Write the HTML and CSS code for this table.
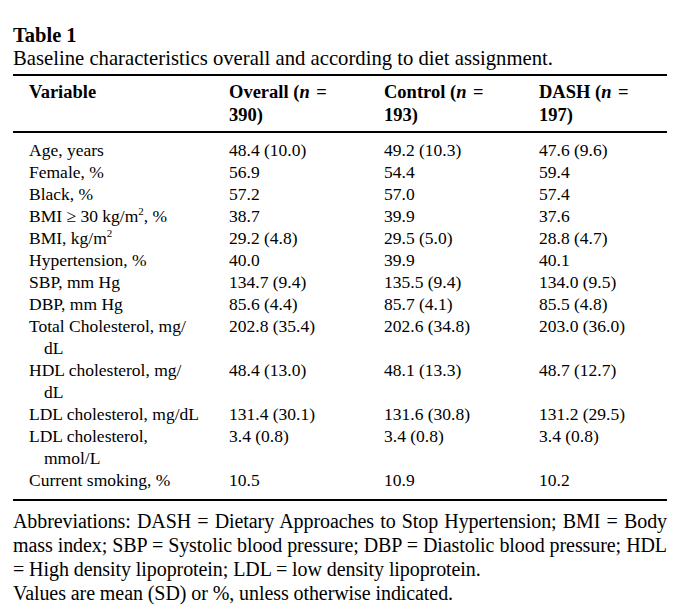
FILE: index.html
```html
<!DOCTYPE html>
<html lang="en">
<head>
<meta charset="utf-8">
<title>Table 1</title>
<link rel="stylesheet" href="styles.css">
</head>
<body>
<div class="page">
  <div class="title">Table 1</div>
  <div class="caption">Baseline characteristics overall and according to diet assignment.</div>
  <table class="data">
    <colgroup>
      <col class="w1">
      <col class="w2">
      <col class="w3">
      <col class="w4">
    </colgroup>
    <thead>
      <tr>
        <th class="c1">Variable</th>
        <th>Overall (<i>n</i> <span class="eq">=</span><br>390)</th>
        <th>Control (<i>n</i> <span class="eq">=</span><br>193)</th>
        <th>DASH (<i>n</i> <span class="eq">=</span><br>197)</th>
      </tr>
    </thead>
    <tbody>
      <tr class="first"><td class="c1">Age, years</td><td>48.4 (10.0)</td><td>49.2 (10.3)</td><td>47.6 (9.6)</td></tr>
      <tr><td class="c1">Female, %</td><td>56.9</td><td>54.4</td><td>59.4</td></tr>
      <tr><td class="c1">Black, %</td><td>57.2</td><td>57.0</td><td>57.4</td></tr>
      <tr><td class="c1">BMI <span class="geq">≥</span> 30 kg/m<sup>2</sup>, %</td><td>38.7</td><td>39.9</td><td>37.6</td></tr>
      <tr><td class="c1">BMI, kg/m<sup>2</sup></td><td>29.2 (4.8)</td><td>29.5 (5.0)</td><td>28.8 (4.7)</td></tr>
      <tr><td class="c1">Hypertension, %</td><td>40.0</td><td>39.9</td><td>40.1</td></tr>
      <tr><td class="c1">SBP, mm Hg</td><td>134.7 (9.4)</td><td>135.5 (9.4)</td><td>134.0 (9.5)</td></tr>
      <tr><td class="c1">DBP, mm Hg</td><td>85.6 (4.4)</td><td>85.7 (4.1)</td><td>85.5 (4.8)</td></tr>
      <tr><td class="c1">Total Cholesterol, mg/<br>dL</td><td>202.8 (35.4)</td><td>202.6 (34.8)</td><td>203.0 (36.0)</td></tr>
      <tr><td class="c1">HDL cholesterol, mg/<br>dL</td><td>48.4 (13.0)</td><td>48.1 (13.3)</td><td>48.7 (12.7)</td></tr>
      <tr><td class="c1">LDL cholesterol, mg/dL</td><td>131.4 (30.1)</td><td>131.6 (30.8)</td><td>131.2 (29.5)</td></tr>
      <tr><td class="c1">LDL cholesterol,<br>mmol/L</td><td>3.4 (0.8)</td><td>3.4 (0.8)</td><td>3.4 (0.8)</td></tr>
      <tr class="last"><td class="c1">Current smoking, %</td><td>10.5</td><td>10.9</td><td>10.2</td></tr>
    </tbody>
  </table>
  <div class="notes">
    <span class="line just">Abbreviations: DASH = Dietary Approaches to Stop Hypertension; BMI = Body</span>
    <span class="line just">mass index; SBP = Systolic blood pressure; DBP = Diastolic blood pressure; HDL</span>
    <span class="line">= High density lipoprotein; LDL = low density lipoprotein.</span>
    <span class="line">Values are mean (SD) or %, unless otherwise indicated.</span>
  </div>
</div>
</body>
</html>
```

FILE: styles.css
```css
html, body {
  margin: 0;
  padding: 0;
  background: #ffffff;
}

body {
  font-family: "Liberation Serif", "Times New Roman", serif;
  color: #000000;
}

.page {
  width: 654px;
  padding: 23px 0 0 13px;
}

.title {
  font-weight: bold;
  font-size: 20.5px;
  line-height: 24px;
}

.caption {
  font-size: 20.7px;
  line-height: 24px;
  margin-top: -1px;
}

.data {
  width: 654px;
  table-layout: fixed;
  border-collapse: collapse;
  margin-top: 4px;
  border-top: 2px solid #000;
  border-bottom: 2px solid #000;
}

.w1 { width: 216px; }
.w2 { width: 155px; }
.w3 { width: 155px; }
.w4 { width: 128px; }

.data thead tr {
  border-bottom: 2px solid #000;
}

.data th {
  font-weight: bold;
  font-size: 18.5px;
  line-height: 23px;
  text-align: left;
  vertical-align: top;
  padding: 5px 0 4px 0;
  white-space: nowrap;
}

.data th i {
  font-style: italic;
}

.eq {
  padding-left: 2px;
}

.data td {
  font-size: 17.5px;
  line-height: 22px;
  padding: 0;
  vertical-align: top;
  white-space: nowrap;
}

.data .first td {
  padding-top: 6px;
}

.data .last td {
  padding-bottom: 8px;
}

.data td.c1 {
  padding-left: 31px;
  text-indent: -15px;
}

.data th.c1 {
  padding-left: 16px;
}

sup {
  font-size: 11px;
  line-height: 0;
  vertical-align: 7px;
}

.notes {
  margin-top: 8px;
  font-size: 20px;
  line-height: 24px;
  letter-spacing: -0.08px;
}

.line {
  display: block;
  white-space: nowrap;
}

.line.just {
  text-align: justify;
  text-align-last: justify;
}
```
